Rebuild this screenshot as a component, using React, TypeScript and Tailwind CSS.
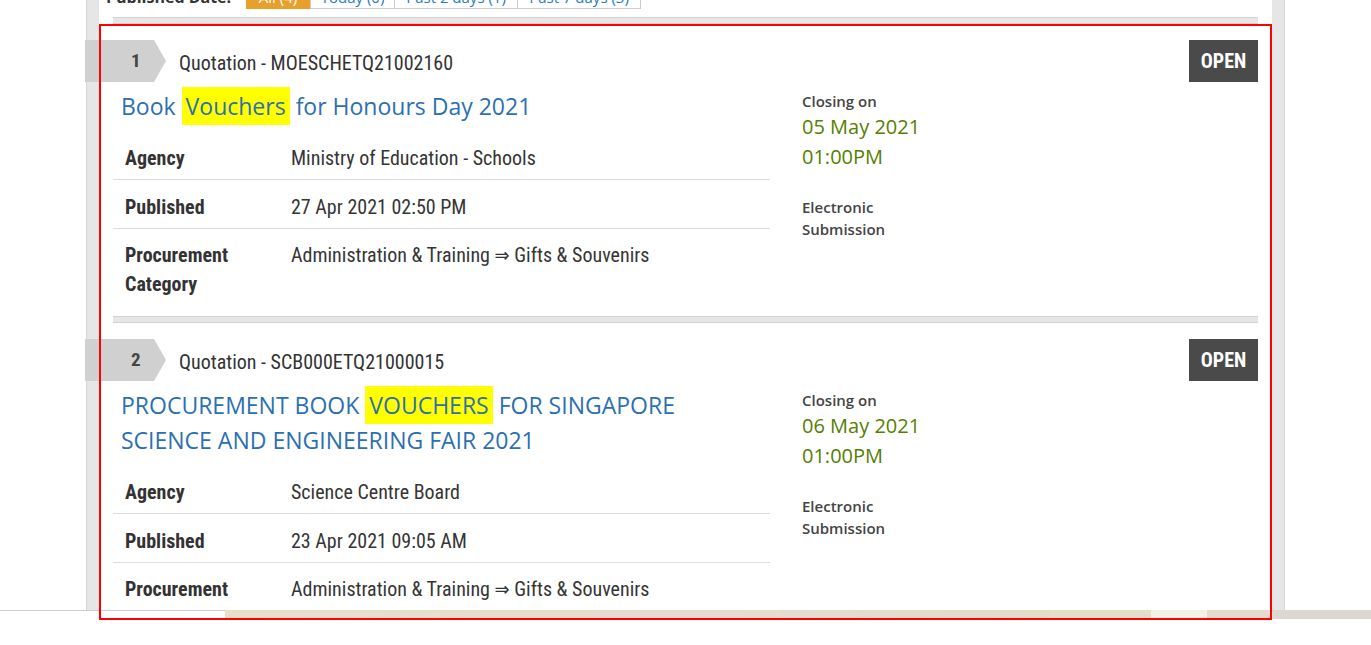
const cond = "[font-family:'Roboto_Condensed','Liberation_Sans_Narrow','DejaVu_Sans_Condensed',sans-serif]";
const open = "[font-family:'Open_Sans',sans-serif]";

const tenders = [
  {
    n: 1,
    ref: "Quotation - MOESCHETQ21002160",
    title: ["Book ", "Vouchers", " for Honours Day 2021"],
    agency: "Ministry of Education - Schools",
    published: "27 Apr 2021 02:50 PM",
    category: "Administration & Training ⇒ Gifts & Souvenirs",
    closeDate: "05 May 2021",
    closeTime: "01:00PM",
  },
  {
    n: 2,
    ref: "Quotation - SCB000ETQ21000015",
    title: ["PROCUREMENT BOOK ", "VOUCHERS", " FOR SINGAPORE SCIENCE AND ENGINEERING FAIR 2021"],
    agency: "Science Centre Board",
    published: "23 Apr 2021 09:05 AM",
    category: "Administration & Training ⇒ Gifts & Souvenirs",
    closeDate: "06 May 2021",
    closeTime: "01:00PM",
  },
];

type Tender = (typeof tenders)[number];

function Divider() {
  return <div className="h-[7px] border-y border-[#d2d2d2] bg-[#e6e6e6]" />;
}

function Row({ label, value, last }: { label: React.ReactNode; value: string; last?: boolean }) {
  return (
    <div className={last ? "flex pt-[12px] pb-[7px]" : "flex pt-[13px] pb-[6px] border-b border-[#dddddd]"}>
      <div className="w-[178px] shrink-0 pl-[12px] font-bold text-[#333]">{label}</div>
      <div className="text-[#353535]">{value}</div>
    </div>
  );
}

function TenderItem({ t }: { t: Tender }) {
  return (
    <div className="pt-[16px]">
      <div className="flex items-center h-[42px]">
        <div
          className={`${cond} ml-[-28px] w-[81px] h-[42px] bg-[#d0d0d0] pl-[46px] flex items-center text-[19px] font-bold text-[#444] [clip-path:polygon(0_0,calc(100%_-_12px)_0,100%_50%,calc(100%_-_12px)_100%,0_100%)]`}
        >
          {t.n}
        </div>
        <div className={`${cond} ml-[13px] mt-[3px] text-[20px] text-[#333]`}>{t.ref}</div>
        <div className={`${cond} ml-auto w-[69px] h-[42px] bg-[#4a4a4a] text-white font-bold text-[20px] flex items-center justify-center`}>
          OPEN
        </div>
      </div>
      <div className="flex">
        <div className="w-[657px] shrink-0">
          <h2 className={`${open} mt-[7px] pl-[8px] text-[23px] leading-[35px] text-[#2c70b2]`}>
            {t.title[0]}
            <span className="bg-[#ffff00] px-[4px] py-[3px]">{t.title[1]}</span>
            {t.title[2]}
          </h2>
          <div className={`${cond} mt-[7px] text-[20px] leading-[29px]`}>
            <Row label="Agency" value={t.agency} />
            <Row label="Published" value={t.published} />
            <Row
              label={
                <>
                  Procurement
                  <br />
                  Category
                </>
              }
              value={t.category}
              last
            />
          </div>
        </div>
        <div className={`${open} pl-[32px] mt-2`}>
          <div className="text-[15px] leading-[22px] font-semibold text-[#444]">Closing on</div>
          <div className="text-[20px] leading-[30px] text-[#558000]">{t.closeDate}</div>
          <div className="text-[20px] leading-[30px] text-[#558000]">{t.closeTime}</div>
          <div className="mt-[24px] text-[15px] leading-[22px] font-semibold text-[#444]">
            Electronic
            <br />
            Submission
          </div>
        </div>
      </div>
      <div className="mt-[10px]">
        <Divider />
      </div>
    </div>
  );
}

export default function App() {
  return (
    <div className="relative w-[1371px] h-[645px] bg-white overflow-hidden">
      <div className="flex h-[610px] overflow-hidden">
        <div className="w-[86px] shrink-0" />
        <div className="w-[1199px] shrink-0 bg-[#e6e6e6] border-x border-[#d6d6d6] px-[12px]">
          <div className="flow-root bg-white h-full px-[14px]">
            <div className={`${open} flex items-end mt-[-17px] ml-[-7px] text-[15px]`}>
              <span className="w-[140px] font-bold text-[#333] text-[16px] leading-[20px] pt-[3px] pb-[2px]">Published Date:</span>
              <span className="w-[64px] text-center bg-[#e8a02a] text-white border border-[#e8a02a] pt-[3px] pb-[1px] leading-[20px]">All (4)</span>
              <span className="w-[85px] text-center text-[#2a7ac0] border border-[#cccccc] pt-[3px] pb-[1px] leading-[20px]">Today (0)</span>
              <span className="w-[123px] text-center text-[#2a7ac0] border border-l-0 border-[#cccccc] pt-[3px] pb-[1px] leading-[20px]">Past 2 days (1)</span>
              <span className="w-[123px] text-center text-[#2a7ac0] border border-l-0 border-[#cccccc] pt-[3px] pb-[1px] leading-[20px]">Past 7 days (3)</span>
            </div>
            <div className="mt-[8px]">
              <Divider />
            </div>
            {tenders.map((t) => (
              <TenderItem key={t.n} t={t} />
            ))}
          </div>
        </div>
      </div>
      <div className="flex h-[9px]">
        <div className="w-[225px] bg-white border-t border-[#cccccc]" />
        <div className="w-[555px] bg-gradient-to-r from-[#e9dfcb] to-[#e7dccf]" />
        <div className="w-[270px] bg-gradient-to-r from-[#e6dbd1] to-[#e3dcc6]" />
        <div className="w-[101px] bg-[#e5dec8]" />
        <div className="w-[56px] bg-[#f4f1e7]" />
        <div className="w-[65px] bg-[#e5dccd]" />
        <div className="flex-1 bg-[#dcd8cf]" />
      </div>
      <div className="absolute left-[99px] top-[24px] w-[1173px] h-[596px] border-2 border-[#ff0000] pointer-events-none" />
    </div>
  );
}
